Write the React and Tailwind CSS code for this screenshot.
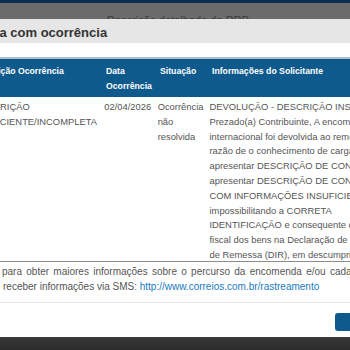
import React from "react";

const lines = [
  "DEVOLUÇÃO - DESCRIÇÃO INSUFICIENTE/INCOMPLETA",
  "Prezado(a) Contribuinte, A encomenda",
  "internacional foi devolvida ao remetente em",
  "razão de o conhecimento de carga não",
  "apresentar DESCRIÇÃO DE CONTEÚDO ou",
  "apresentar DESCRIÇÃO DE CONTEÚDO",
  "COM INFORMAÇÕES INSUFICIENTES,",
  "impossibilitando a CORRETA",
  "IDENTIFICAÇÃO e consequente classificação",
  "fiscal dos bens na Declaração de Importação",
  "de Remessa (DIR), em descumprimento",
  "deixando de atender ao disposto na legislação",
  "vigente.",
];

export default function App() {
  const font = { fontFamily: '"Liberation Sans", Arial, sans-serif' };
  return (
    <div
      className="relative w-[350px] h-[350px] overflow-hidden bg-[#6b6b6b]"
      style={font}
    >
      <div className="h-[3px] bg-[#0b2f4e]" />
      <div className="pt-[11px] pl-[107px] text-[11px] leading-[12px] text-[#3a3a3a] whitespace-nowrap">
        Descrição detalhada da DRP
      </div>
      <div className="absolute left-0 right-0 bottom-0 h-[16px] bg-gradient-to-b from-[#3d3d3d] to-[#2a2a2a]" />

      <div className="absolute left-[-82px] top-[19px] w-[560px] bg-white">
        <div className="h-[24px] pt-[6px] px-[15px] bg-[#e6e6e6] text-[13px] leading-[16px] font-bold text-[#333] whitespace-nowrap">
          Encomenda com ocorrência
        </div>
        <div className="pt-[14px] pl-[50px] pr-[15px]">
          <div className="h-[205px] overflow-hidden border-t-[2px] border-[#aebfcc] border-b border-b-[#8c8c8c]">
            <div className="flex bg-[#0f5a8c] text-white font-bold text-[8.7px] leading-[15px] pt-[5px] pb-[3px] whitespace-nowrap">
              <div className="w-[132px] pl-[6px]">Descrição Ocorrência</div>
              <div className="w-[54px] pl-[6px]">
                Data
                <br />
                Ocorrência
              </div>
              <div className="w-[52px] pl-[6px]">Situação</div>
              <div className="flex-1 pl-[6px]">Informações do Solicitante</div>
            </div>
            <div className="flex text-[9.4px] leading-[14.8px] text-[#555] pt-[3px] whitespace-nowrap">
              <div className="w-[132px] pl-[6px]">
                <div>DESCRIÇÃO</div>
                <div className="-ml-[5px]">INSUFICIENTE/INCOMPLETA</div>
              </div>
              <div className="w-[54px] pl-[6px]">02/04/2026</div>
              <div className="w-[52px] pl-[6px]">
                Ocorrência
                <br />
                não
                <br />
                resolvida
              </div>
              <div className="flex-1 pl-[6px]">
                {lines.map((l, i) => (
                  <div key={i}>{l}</div>
                ))}
              </div>
            </div>
          </div>
        </div>
        <div className="pl-[84px] pt-[2px] text-[10px] leading-[15px] text-[#555] whitespace-nowrap">
          <div className="[word-spacing:1.5px]">
            para obter maiores informações sobre o percurso da encomenda e/ou cadastre-se
          </div>
          <div className="pl-[1px]">
            receber informações via SMS:{" "}
            <span className="text-[#1a7bbf]">http://www.correios.com.br/rastreamento</span>
          </div>
        </div>
        <div className="mt-[8px] border-t border-[#e5e5e5] flex pl-[417px] pt-[10px] pb-[6px]">
          <div className="w-[60px] h-[18px] rounded-[3px] bg-[#0f5a8c]" />
        </div>
      </div>
    </div>
  );
}
